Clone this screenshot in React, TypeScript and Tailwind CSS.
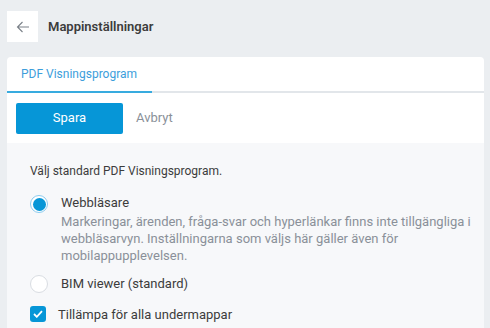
import React from 'react';

const font = { fontFamily: 'Roboto, "Noto Sans", sans-serif' };

const BackArrow = () => (
  <svg width="14" height="14" viewBox="0 0 14 14" fill="none" stroke="#7a8088" strokeWidth="1.1">
    <path d="M13 7H1.5M6.5 2L1.5 7l5 5" />
  </svg>
);

const Radio = ({ checked }: { checked: boolean }) =>
  checked ? (
    <span className="flex h-[18px] w-[18px] items-center justify-center rounded-full border border-[#8ccbee] bg-white">
      <span className="h-[13px] w-[13px] rounded-full bg-[#0696d7]" />
    </span>
  ) : (
    <span className="block h-[18px] w-[18px] rounded-full border border-[#d9dde2] bg-white" />
  );

export default function App() {
  return (
    <div className="h-[328px] w-[490px] overflow-hidden bg-[#ebeef1] pl-[7px] pr-[6px]" style={font}>
      {/* header */}
      <div className="flex h-[57px] items-start pt-[11px]">
        <button className="flex h-[31px] w-[31px] items-center justify-center bg-white">
          <BackArrow />
        </button>
        <span className="ml-[10px] mt-[6px] text-[13px] font-semibold text-[#3c3c3c]">Mappinställningar</span>
      </div>

      {/* card */}
      <div className="overflow-hidden rounded-t-[4px] bg-white">
        <div className="flex h-[36px] border-b-2 border-[#e2e6ea]">
          <div className="-mb-[2px] flex w-[145px] items-center border-b-2 border-[#38abdf] pl-[14px] text-[12px] text-[#3d9edb]">
            PDF Visningsprogram
          </div>
        </div>
        <div className="flex h-[50px] items-center gap-[13px] pl-[9px]">
          <button className="h-[31px] w-[107px] rounded-[2px] bg-[#0696d7] text-[13px] text-white">Spara</button>
          <span className="text-[13px] text-[#8a9099]">Avbryt</span>
        </div>
        <div className="h-[200px] bg-[#f7f8fa] pl-[23px] pt-[20px]">
          <p className="text-[12px] leading-[17px] text-[#3c3c3c]">Välj standard PDF Visningsprogram.</p>
          <div className="mt-[14px] flex">
            <div className="pt-[1px]"><Radio checked /></div>
            <div className="ml-[13px]">
              <div className="text-[13px] leading-[17px] text-[#3c3c3c]">Webbläsare</div>
              <div className="mt-[2px] w-[410px] text-[13px] leading-[17px] text-[#8a9099]">
                Markeringar, ärenden, fråga-svar och hyperlänkar finns inte tillgängliga i webbläsarvyn. Inställningarna som väljs här gäller även för mobilappupplevelsen.
              </div>
            </div>
          </div>
          <div className="mt-[10px] flex items-center">
            <Radio checked={false} />
            <span className="ml-[13px] text-[13px] text-[#3c3c3c]">BIM viewer (standard)</span>
          </div>
          <div className="mt-[11px] flex items-center">
            <span className="flex h-[16px] w-[16px] items-center justify-center rounded-[3px] bg-[#0696d7]">
              <svg width="10" height="8" viewBox="0 0 10 8" fill="none" stroke="white" strokeWidth="1.8">
                <path d="M1 4l2.8 2.8L9 1.2" />
              </svg>
            </span>
            <span className="ml-[12px] text-[13px] text-[#3c3c3c]">Tillämpa för alla undermappar</span>
          </div>
        </div>
      </div>
    </div>
  );
}
